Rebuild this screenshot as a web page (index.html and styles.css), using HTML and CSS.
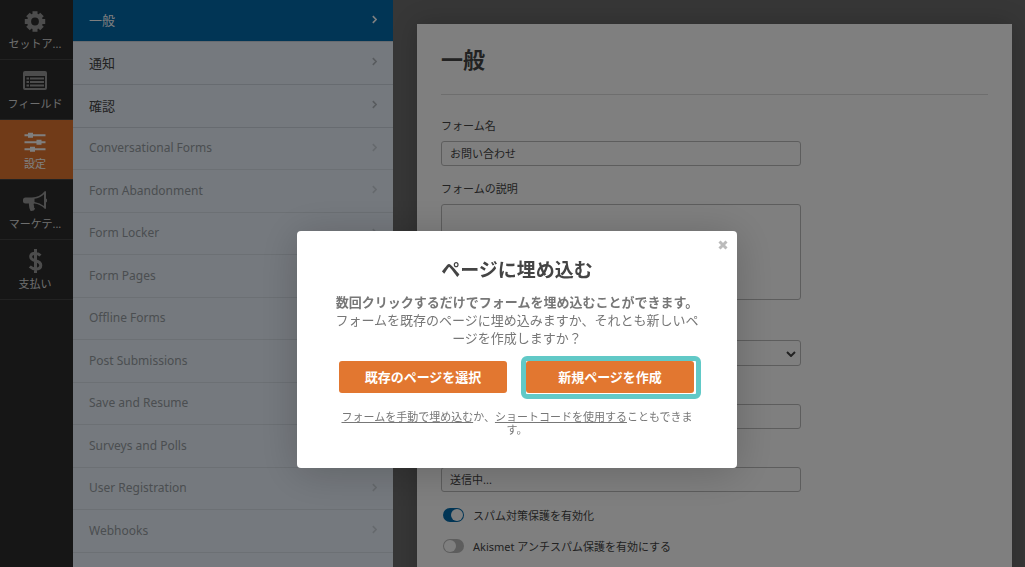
FILE: index.html
```html
<!DOCTYPE html>
<html lang="ja">
<head>
<meta charset="utf-8">
<title>ページに埋め込む</title>
<link rel="stylesheet" href="styles.css">
</head>
<body>
<div class="builder">
  <nav class="toolbar">
    <button class="tool" type="button">
      <svg class="tool-icon" viewBox="0 0 24 24"><circle class="gear-ring" cx="12" cy="12.500" r="5.900"/><path class="gear-teeth" d="M12 2.300v3.500M12 19.200v3.500M1.800 12.500h3.500M18.700 12.500h3.500M5 5.500l2.300 2.300M16.700 17.200l2.300 2.300M19 5.500l-2.300 2.300M7.300 17.200l-2.300 2.300"/></svg>
      <span>セットア...</span>
    </button>
    <button class="tool" type="button">
      <svg class="tool-icon" viewBox="0 0 24 24"><path fill-rule="evenodd" d="M2 2h20q2 0 2 2v15q0 2-2 2H2q-2 0-2-2V4q0-2 2-2zM2 7v12h20V7zM3.500 8.500H6v2H3.500zm3.500 0h14v2H7zM3.500 12H6v2H3.500zM7 12h14v2H7zM3.500 15.500H6v2H3.500zm3.500 0h14v2H7z"/></svg>
      <span>フィールド</span>
    </button>
    <button class="tool tool-active" type="button">
      <svg class="tool-icon" viewBox="0 0 24 24"><path d="M1.500 5.200h21v2h-21zM1.500 12.200h21v2h-21zM1.500 19.200h21v2h-21z"/><path d="M5 3.700h5v5H5zM13.500 10.700h5v5h-5zM7 17.700h5v5H7z"/></svg>
      <span>設定</span>
    </button>
    <button class="tool" type="button">
      <svg class="tool-icon" viewBox="0 0 24 24"><path fill-rule="evenodd" d="M22 2q1 0 1 1v6.500q1.200.8 1.200 2T23 13.500V19q0 1-1 1-4.500-4.800-11-5.400-.8 1.300.3 2.500-1 1.200.8 2.700-1 2.500-4.500 2.200-2-3.600-1.600-7.400H2.500Q0 14.600 0 12.500v-1.500Q0 8.500 2.500 8.500H9q7.500 0 13-6.500zm-1 3.200q-4 3.800-9.500 4.600v3.300q5.500.8 9.500 4z"/></svg>
      <span>マーケテ...</span>
    </button>
    <button class="tool" type="button">
      <svg class="tool-icon" viewBox="0 0 24 24"><path class="stroke" d="M12.500 0v24M17.500 6.500Q15 4.200 12.500 4.200q-4.800 0-4.800 3.500 0 2.700 4.800 4 5.300 1.400 5.300 4.500 0 3.800-5.300 3.800-3 0-5.700-2.500"/></svg>
      <span>支払い</span>
    </button>
  </nav>

  <nav class="sections">
    <a class="section section-active" href="#">一般<svg class="arrow" viewBox="0 0 6 10"><path d="M1 1l4 4-4 4"/></svg></a>
    <a class="section" href="#">通知<svg class="arrow" viewBox="0 0 6 10"><path d="M1 1l4 4-4 4"/></svg></a>
    <a class="section" href="#">確認<svg class="arrow" viewBox="0 0 6 10"><path d="M1 1l4 4-4 4"/></svg></a>
    <a class="section section-off" href="#">Conversational Forms<svg class="arrow" viewBox="0 0 6 10"><path d="M1 1l4 4-4 4"/></svg></a>
    <a class="section section-off" href="#">Form Abandonment<svg class="arrow" viewBox="0 0 6 10"><path d="M1 1l4 4-4 4"/></svg></a>
    <a class="section section-off" href="#">Form Locker<svg class="arrow" viewBox="0 0 6 10"><path d="M1 1l4 4-4 4"/></svg></a>
    <a class="section section-off" href="#">Form Pages<svg class="arrow" viewBox="0 0 6 10"><path d="M1 1l4 4-4 4"/></svg></a>
    <a class="section section-off" href="#">Offline Forms<svg class="arrow" viewBox="0 0 6 10"><path d="M1 1l4 4-4 4"/></svg></a>
    <a class="section section-off" href="#">Post Submissions<svg class="arrow" viewBox="0 0 6 10"><path d="M1 1l4 4-4 4"/></svg></a>
    <a class="section section-off" href="#">Save and Resume<svg class="arrow" viewBox="0 0 6 10"><path d="M1 1l4 4-4 4"/></svg></a>
    <a class="section section-off" href="#">Surveys and Polls<svg class="arrow" viewBox="0 0 6 10"><path d="M1 1l4 4-4 4"/></svg></a>
    <a class="section section-off" href="#">User Registration<svg class="arrow" viewBox="0 0 6 10"><path d="M1 1l4 4-4 4"/></svg></a>
    <a class="section section-off" href="#">Webhooks<svg class="arrow" viewBox="0 0 6 10"><path d="M1 1l4 4-4 4"/></svg></a>
  </nav>

  <main class="workspace">
    <form class="panel">
      <h1 class="panel-title">一般</h1>
      <div class="field">
        <label class="label" for="name">フォーム名</label>
        <input class="control" id="name" type="text" value="お問い合わせ">
      </div>
      <div class="field">
        <label class="label" for="desc">フォームの説明</label>
        <textarea class="control control-area" id="desc"></textarea>
      </div>
      <div class="field field-bare">
        <div class="select">
          <select class="control control-select" aria-label="タグ"><option></option></select>
          <svg class="chevron" viewBox="0 0 10 6"><path d="M1 1l4 4 4-4"/></svg>
        </div>
      </div>
      <div class="field field-bare">
        <input class="control" type="text" aria-label="送信ボタン">
      </div>
      <div class="field field-bare">
        <input class="control" type="text" aria-label="送信ボタン処理中" value="送信中...">
      </div>
      <label class="switch"><input class="toggle" type="checkbox" checked>スパム対策保護を有効化</label>
      <label class="switch"><input class="toggle" type="checkbox">Akismet アンチスパム保護を有効にする</label>
    </form>
  </main>
</div>

<div class="overlay">
  <section class="modal" role="dialog" aria-labelledby="modal-title">
    <button class="close" type="button" aria-label="閉じる"><svg class="close-icon" viewBox="0 0 10 10"><path d="M1.500 1.500l7 7M8.500 1.500l-7 7"/></svg></button>
    <h2 class="modal-title" id="modal-title">ページに埋め込む</h2>
    <p class="modal-text"><b>数回クリックするだけでフォームを埋め込むことができます。</b><br>フォームを既存のページに埋め込みますか、それとも新しいページを作成しますか？</p>
    <div class="actions">
      <button class="action" type="button">既存のページを選択</button>
      <button class="action action-marked" type="button">新規ページを作成</button>
    </div>
    <p class="modal-note"><a class="note-link" href="#">フォームを手動で埋め込む</a>か、<a class="note-link" href="#">ショートコードを使用する</a>こともできます。</p>
  </section>
</div>
</body>
</html>
```
FILE: styles.css
```css
* {
  box-sizing: border-box;
}

body {
  margin: 0;
  height: 100vh;
  overflow: hidden;
  color: #444;
  font-family: "Noto Sans", "Noto Sans CJK JP", sans-serif;
  font-size: 11px;
}

button,
input,
select,
textarea {
  font: inherit;
}

.builder {
  display: flex;
  height: 100%;
}

/* Icon bar */
.toolbar {
  flex: 0 0 73px;
  display: flex;
  flex-direction: column;
  background: #2d2d2d;
}

.tool {
  display: flex;
  flex-direction: column;
  align-items: center;
  gap: 3px;
  height: 60px;
  padding: 9px 3px 0 0;
  border: 0;
  border-bottom: 1px solid #444;
  background: none;
  color: #ddd;
  line-height: 16px;
  white-space: nowrap;
}

.tool-icon {
  width: 24px;
  height: 24px;
  fill: #999;
}

.tool-icon .stroke {
  fill: none;
  stroke: #999;
  stroke-width: 3;
}

.gear-ring {
  fill: none;
  stroke: #999;
  stroke-width: 4;
}

.gear-teeth {
  stroke: #999;
  stroke-width: 5;
}

.tool-active {
  background: #e27730;
  color: #fff;
}

.tool-active .tool-icon {
  fill: #fff;
}

/* Settings sections */
.sections {
  flex: 0 0 320px;
  background: #ebf3fc;
}

.section {
  display: flex;
  align-items: center;
  justify-content: space-between;
  height: 43px;
  padding: 0 16px 2px;
  border-bottom: 1px solid #ced7e0;
  color: #444;
  font-size: 13px;
  text-decoration: none;
}

.section:first-child,
.section:nth-child(2n + 4) {
  height: 42px;
}

.section-active {
  background: #036aab;
  color: #fff;
}

.section-off {
  border-bottom-color: #d8e0e9;
  color: #969ca2;
  font-size: 12px;
}

.arrow {
  width: 5px;
  height: 9px;
  margin-bottom: 1px;
  fill: none;
  stroke: #b0b6bd;
  stroke-width: 2;
}

.section-active .arrow {
  stroke: #fff;
}

.section-off .arrow {
  stroke: #cbd2da;
}

/* Settings form */
.workspace {
  flex: 1;
  padding: 24px 13px 0 24px;
  background: #6e6e6e;
}

.panel {
  min-height: 100%;
  padding: 23px 24px;
  background: #fff;
  box-shadow: 0 0 24px rgba(0, 0, 0, 0.2);
}

.panel-title {
  margin: 0 0 23px;
  padding-bottom: 23px;
  border-bottom: 1px solid #ddd;
  font-size: 22px;
  line-height: 24px;
}

.field {
  display: flex;
  flex-direction: column;
  gap: 7px;
  max-width: 360px;
  margin-bottom: 15px;
}

.field-bare {
  padding-top: 23px;
}

.label {
  line-height: 16px;
}

.control {
  width: 100%;
  height: 25px;
  padding: 0 8px 2px;
  border: 1px solid #bbb;
  border-radius: 3px;
  background: #fff;
  color: #444;
  appearance: none;
}

.control-area {
  height: 96px;
  margin-bottom: 2px;
  resize: none;
}

.control-select {
  height: 26px;
}

.select {
  position: relative;
  display: flex;
}

.chevron {
  position: absolute;
  top: 11px;
  right: 5px;
  width: 10px;
  height: 6px;
  fill: none;
  stroke: #444;
  stroke-width: 2;
}

.switch {
  display: flex;
  align-items: center;
  gap: 9px;
  height: 16px;
  margin-bottom: 15px;
  padding-left: 2px;
}

.toggle {
  display: flex;
  width: 21px;
  height: 14px;
  margin: 0;
  padding: 1px;
  border-radius: 7px;
  background: #bbb;
  appearance: none;
}

.toggle::before {
  content: "";
  width: 12px;
  height: 12px;
  border-radius: 50%;
  background: #fff;
}

.toggle:checked {
  justify-content: flex-end;
  background: #036aab;
}

/* Embed dialog */
.overlay {
  position: fixed;
  inset: 0;
  display: flex;
  align-items: flex-start;
  justify-content: center;
  padding: 231px 0 0 9px;
  background: rgba(0, 0, 0, 0.5);
}

.modal {
  position: relative;
  width: 440px;
  padding: 26px 38px 32px;
  border-radius: 4px;
  background: #fff;
  box-shadow: 0 4px 40px rgba(0, 0, 0, 0.2);
  color: #777;
  text-align: center;
}

.close {
  position: absolute;
  top: 9px;
  right: 9px;
  display: flex;
  padding: 0;
  border: 0;
  background: none;
}

.close-icon {
  width: 10px;
  height: 10px;
  stroke: #bbb;
  stroke-width: 3;
}

.modal-title {
  margin: 0 0 10px;
  color: #444;
  font-size: 19px;
  line-height: 26px;
}

.modal-text {
  margin: 0 0 14px;
  font-size: 13px;
  line-height: 18px;
}

.actions {
  display: flex;
  gap: 19px;
  padding-left: 4px;
}

.action {
  position: relative;
  width: 168px;
  height: 32px;
  padding: 0 0 2px;
  border: 0;
  border-radius: 3px;
  background: #e27730;
  color: #fff;
  font-size: 13px;
  font-weight: 700;
}

.action-marked::after {
  content: "";
  position: absolute;
  inset: -5px -7px -6px -5px;
  border: 5px solid #61c9c7;
  border-radius: 6px;
}

.modal-note {
  margin: 17px 0 0;
  line-height: 13px;
}

.note-link {
  color: inherit;
}
```
